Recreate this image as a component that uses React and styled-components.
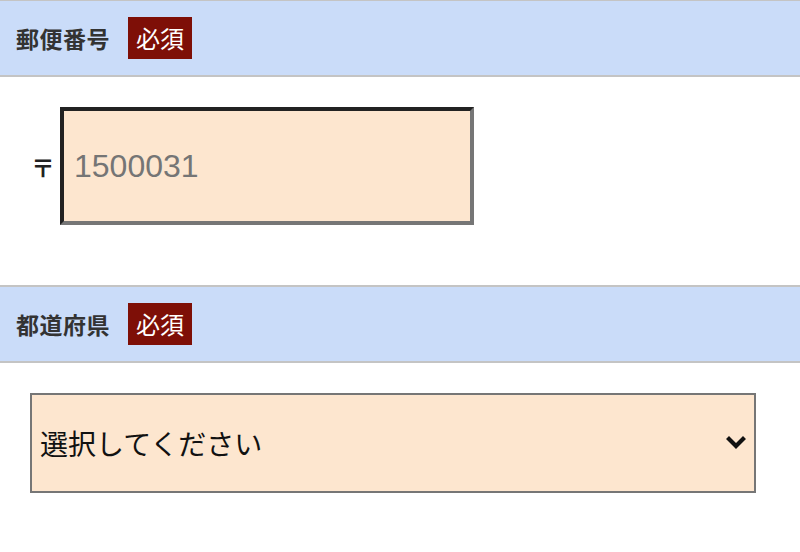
import styled, { createGlobalStyle } from 'styled-components'

const GlobalStyle = createGlobalStyle`
  html, body {
    margin: 0;
    padding: 0;
    background: #fff;
  }
  body {
    font-family: "Liberation Sans", "Noto Sans CJK JP", sans-serif;
    color: #333;
  }
`

const Form = styled.div`
  margin-top: -1px;
  width: 800px;
`

const SectionHeader = styled.div`
  display: flex;
  align-items: center;
  gap: 18px;
  height: 74px;
  padding-left: 16px;
  background: #cadcf9;
  border-top: 2px solid #c4c4c4;
  border-bottom: 2px solid #c4c4c4;
`

const Title = styled.h2`
  margin: 0;
  font-family: "Noto Sans CJK JP", sans-serif;
  font-size: 23px;
  font-weight: 700;
  color: #333;
  letter-spacing: 0.5px;
`

const Required = styled.span`
  display: inline-flex;
  align-items: center;
  height: 42px;
  padding: 0 8px;
  background: #7e0f07;
  color: #fff;
  font-family: "Noto Sans CJK JP", sans-serif;
  font-size: 24px;
  line-height: 1;
`

const SectionBody = styled.div`
  display: flex;
  align-items: center;
  gap: ${(p) => p.$gap || 0}px;
  padding: 30px 30px;
  margin-bottom: ${(p) => p.$bottom || 0}px;
`

const PostMark = styled.span`
  font-family: "Noto Sans CJK JP", sans-serif;
  font-size: 24px;
  font-weight: 700;
  color: #222;
  width: 26px;
  text-align: center;
`

const ZipInput = styled.input`
  box-sizing: border-box;
  width: 414px;
  height: 118px;
  margin: 0;
  padding: 0 10px;
  border: 4px solid #767676;
  border-top-color: #222;
  border-left-color: #222;
  background: #fde6cf;
  font-family: "Liberation Sans", sans-serif;
  font-size: 32px;
  color: #333;
  outline: none;

  &::placeholder {
    color: #757575;
  }
`

const SelectWrap = styled.div`
  position: relative;
  width: 726px;
`

const Select = styled.select`
  box-sizing: border-box;
  width: 100%;
  height: 100px;
  margin: 0;
  padding: 0 50px 0 8px;
  border: 2px solid #767676;
  border-radius: 0;
  background: #fde6cf;
  appearance: none;
  font-family: "Noto Sans CJK JP", sans-serif;
  font-size: 28px;
  color: #111;
  outline: none;
`

const Chevron = styled.svg`
  position: absolute;
  right: 9px;
  top: 50%;
  width: 22px;
  height: 16px;
  margin-top: -8px;
  pointer-events: none;
`

export default function App() {
  return (
    <>
      <GlobalStyle />
      <Form>
        <SectionHeader>
          <Title>郵便番号</Title>
          <Required>必須</Required>
        </SectionHeader>
        <SectionBody $gap={4} $bottom={30}>
          <PostMark>〒</PostMark>
          <ZipInput type="text" placeholder="1500031" />
        </SectionBody>

        <SectionHeader>
          <Title>都道府県</Title>
          <Required>必須</Required>
        </SectionHeader>
        <SectionBody>
          <SelectWrap>
            <Select defaultValue="">
              <option value="">選択してください</option>
              <option value="tokyo">東京都</option>
              <option value="osaka">大阪府</option>
            </Select>
            <Chevron viewBox="0 0 22 16">
              <path d="M4 4 L11 11 L18 4" fill="none" stroke="#111" strokeWidth="4.2" strokeLinecap="square" />
            </Chevron>
          </SelectWrap>
        </SectionBody>
      </Form>
    </>
  )
}
